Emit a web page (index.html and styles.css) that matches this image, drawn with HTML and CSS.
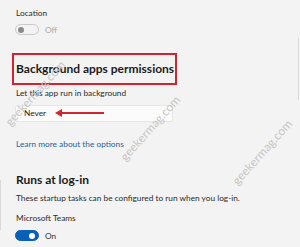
FILE: index.html
```html
<!DOCTYPE html>
<html lang="en">
<head>
  <meta charset="UTF-8" />
  <title>Background apps permissions</title>
  <link rel="stylesheet" href="styles.css">
</head>
<body>
  <div class="page">
    <div class="label">Location</div>
    <div class="toggle-row">
      <span class="toggle toggle-off"><span class="knob"></span></span>
      <span class="state state-off">Off</span>
    </div>

    <div class="perm-box">
      <h2 class="heading">Background apps permissions</h2>
    </div>
    <div class="label label-gap">Let this app run in background</div>
    <div class="dropdown">
      <span class="dropdown-value">Never</span>
      <span class="arrow"></span>
    </div>

    <a class="link" href="#">Learn more about the options</a>

    <h2 class="heading section">Runs at log-in</h2>
    <div class="label label-gap">These startup tasks can be configured to run when you log-in.</div>
    <div class="label teams">Microsoft Teams</div>
    <div class="toggle-row on-row">
      <span class="toggle toggle-on"><span class="knob"></span></span>
      <span class="state">On</span>
    </div>

    <span class="edge edge-right"></span>
    <span class="edge edge-left"></span>

    <span class="watermark wm1">geekermag.com</span>
    <span class="watermark wm2">geekermag.com</span>
    <span class="watermark wm3">geekermag.com</span>
  </div>
</body>
</html>
```

FILE: styles.css
```css
body {
  margin: 0;
  background-color: #f3f3f3;
  font-family: Lato, 'Open Sans', sans-serif;
  color: #1f1f1f;
}
.page {
  position: relative;
  width: 300px;
  height: 247px;
  overflow: hidden;
  padding: 6px 0 0 16px;
  box-sizing: border-box;
}
.label {
  font-size: 8.3px;
  line-height: 14px;
  color: #2b2b2b;
}
.label-gap {
  margin-top: 1px;
}
.teams {
  margin-top: 6px;
}
.toggle-row {
  display: flex;
  align-items: center;
  gap: 6px;
  margin-top: 4px;
  margin-left: -1px;
  height: 11px;
}
.on-row {
  margin-top: 5px;
}
.toggle {
  position: relative;
  width: 22px;
  height: 9px;
  border-radius: 6px;
  display: flex;
  align-items: center;
}
.toggle-off {
  border: 1px solid #c9c9c9;
}
.toggle-off .knob {
  width: 6px;
  height: 6px;
  border-radius: 50%;
  background-color: #8a8a8a;
  margin-left: 2px;
}
.toggle-on {
  background-color: #0a5fb8;
  border: 1px solid #0a5fb8;
  justify-content: flex-end;
}
.toggle-on .knob {
  width: 6px;
  height: 6px;
  border-radius: 50%;
  background-color: #ffffff;
  margin-right: 3px;
}
.state {
  font-size: 8.3px;
  color: #333;
}
.state-off {
  color: #a8a8a8;
}
.perm-box {
  margin-top: 18px;
  margin-left: -4px;
  width: 165px;
  height: 32px;
  box-sizing: border-box;
  border: 2px solid #d42330;
  padding-left: 2px;
}
.heading {
  margin: 0;
  font-size: 12px;
  font-weight: 700;
  line-height: 28px;
  color: #1b1b1b;
  white-space: nowrap;
}
.dropdown {
  position: relative;
  margin-top: 5px;
  margin-left: -1px;
  width: 158px;
  height: 17px;
  box-sizing: border-box;
  background-color: #fbfbfb;
  border: 1px solid #e6e6e6;
  border-radius: 2px;
  padding-left: 8px;
  font-size: 8.3px;
  line-height: 15px;
}
.arrow {
  position: absolute;
  left: 44px;
  top: 6px;
  width: 44px;
  height: 2px;
  background-color: #d42330;
}
.arrow::before {
  content: '';
  position: absolute;
  left: -5px;
  top: -3px;
  border-top: 4px solid transparent;
  border-bottom: 4px solid transparent;
  border-right: 7px solid #d42330;
}
.link {
  display: block;
  margin-top: 15px;
  font-size: 8.3px;
  line-height: 14px;
  color: #2a5fa5;
  text-decoration: none;
}
.section {
  margin-top: 19px;
  line-height: 20px;
}
.edge {
  position: absolute;
  width: 1px;
  background-color: #dadada;
}
.edge-right {
  left: 298px;
  top: 38px;
  height: 62px;
}
.edge-left {
  left: 0;
  top: 180px;
  height: 50px;
}
.watermark {
  position: absolute;
  font-size: 12px;
  color: #c6c6c6;
  white-space: nowrap;
  transform: translate(-50%, -50%) rotate(-48deg);
}
.wm1 {
  left: 35px;
  top: 93px;
}
.wm2 {
  left: 150px;
  top: 128px;
}
.wm3 {
  left: 262px;
  top: 152px;
}
```
